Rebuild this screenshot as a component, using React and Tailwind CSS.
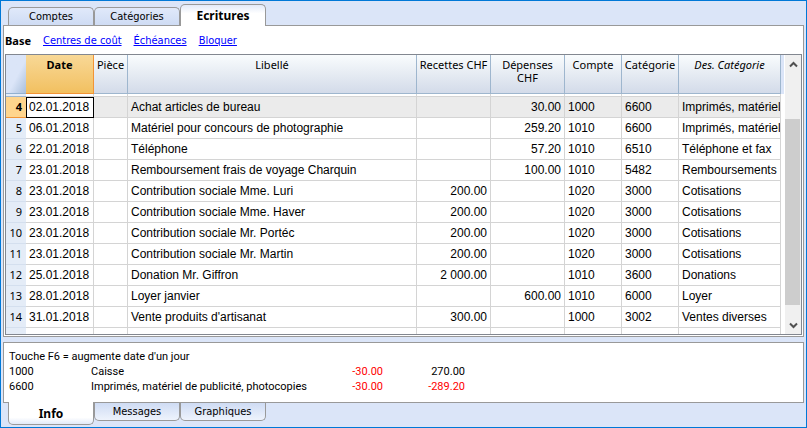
import React, { useState } from 'react';
import clsx from 'clsx';

const ENTRIES = [
    { no: 4, date: '02.01.2018', text: 'Achat articles de bureau', income: '', expense: '30.00', account: '1000', category: '6600', desc: 'Imprimés, matériel' },
    { no: 5, date: '06.01.2018', text: 'Matériel pour concours de photographie', income: '', expense: '259.20', account: '1010', category: '6600', desc: 'Imprimés, matériel' },
    { no: 6, date: '22.01.2018', text: 'Téléphone', income: '', expense: '57.20', account: '1010', category: '6510', desc: 'Téléphone et fax' },
    { no: 7, date: '23.01.2018', text: 'Remboursement frais de voyage Charquin', income: '', expense: '100.00', account: '1010', category: '5482', desc: 'Remboursements' },
    { no: 8, date: '23.01.2018', text: 'Contribution sociale Mme. Luri', income: '200.00', expense: '', account: '1020', category: '3000', desc: 'Cotisations' },
    { no: 9, date: '23.01.2018', text: 'Contribution sociale Mme. Haver', income: '200.00', expense: '', account: '1020', category: '3000', desc: 'Cotisations' },
    { no: 10, date: '23.01.2018', text: 'Contribution sociale Mr. Portéc', income: '200.00', expense: '', account: '1020', category: '3000', desc: 'Cotisations' },
    { no: 11, date: '23.01.2018', text: 'Contribution sociale Mr. Martin', income: '200.00', expense: '', account: '1020', category: '3000', desc: 'Cotisations' },
    { no: 12, date: '25.01.2018', text: 'Donation Mr. Giffron', income: '2 000.00', expense: '', account: '1010', category: '3600', desc: 'Donations' },
    { no: 13, date: '28.01.2018', text: 'Loyer janvier', income: '', expense: '600.00', account: '1010', category: '6000', desc: 'Loyer' },
    { no: 14, date: '31.01.2018', text: "Vente produits d'artisanat", income: '300.00', expense: '', account: '1000', category: '3002', desc: 'Ventes diverses' },
];

const COLUMNS = [
    { label: 'Date', width: 'w-[68px]' },
    { label: 'Pièce', width: 'w-[34px]' },
    { label: 'Libellé', width: '' },
    { label: 'Recettes CHF', width: 'w-[74px]' },
    { label: 'Dépenses CHF', width: 'w-[74px]' },
    { label: 'Compte', width: 'w-[57px]' },
    { label: 'Catégorie', width: 'w-[57px]' },
    { label: 'Des. Catégorie', width: 'w-[102px]' },
];

const INFO = [
    { account: '1000', name: 'Caisse', amount: '-30.00', balance: '270.00' },
    { account: '6600', name: 'Imprimés, matériel de publicité, photocopies', amount: '-30.00', balance: '-289.20' },
];

const TopTab = ({ label, active, onClick }) => (
    <button
        type="button"
        onClick={onClick}
        className={clsx(
            'w-[86px] rounded-t-[5px] border border-b-0 border-[#999999] text-center',
            active
                ? 'relative z-10 -mb-px h-[22px] bg-linear-to-b from-[#e2eaf8] to-white to-40% pt-px font-["Noto_Sans"] text-[12px] leading-[20px] font-bold'
                : 'h-[18px] bg-linear-to-b from-[#e0e9fa] to-[#cfdcf4] pt-px text-[11px] leading-[16px]'
        )}
    >
        {label}
    </button>
);

const BottomTab = ({ label, active, onClick }) => (
    <button
        type="button"
        onClick={onClick}
        className={clsx(
            'w-[86px] rounded-b-[5px] border border-t-0 border-[#999999] text-center',
            active
                ? 'relative z-10 -mt-px h-[23px] bg-linear-to-b from-white from-70% to-[#e2eaf8] pt-[2px] font-["Noto_Sans"] text-[12px] leading-[20px] font-bold'
                : 'h-[18px] bg-linear-to-b from-[#cfdcf4] to-[#eef3fc] pt-px text-[11px] leading-[16px]'
        )}
    >
        {label}
    </button>
);

const Scrollbar = () => (
    <div className="flex w-4 shrink-0 flex-col bg-[#f0f0f0]">
        <button type="button" aria-label="Défiler vers le haut" className="flex h-[18px] items-center justify-center">
            <svg width="9" height="7" viewBox="0 0 9 7" fill="none" stroke="#505050" strokeWidth="2">
                <path d="M1 5.5 L4.5 2 L8 5.5" />
            </svg>
        </button>
        <div className="flex grow flex-col">
            <div className="h-[46px]" />
            <div className="h-[186px] w-[15px] bg-[#cdcdcd]" />
        </div>
        <button type="button" aria-label="Défiler vers le bas" className="flex h-[17px] items-center justify-center">
            <svg width="9" height="7" viewBox="0 0 9 7" fill="none" stroke="#505050" strokeWidth="2">
                <path d="M1 1.5 L4.5 5 L8 1.5" />
            </svg>
        </button>
    </div>
);

const Cell = ({ children, selected, right }) => (
    <td
        className={clsx(
            'overflow-hidden border-r border-b border-[#d4d4d4] whitespace-nowrap',
            right ? 'pr-[3px] text-right' : 'pl-[3px]',
            selected && 'bg-[#ebebeb]'
        )}
    >
        {children}
    </td>
);

const EntriesTable = ({ selected, onSelect }) => (
    <div className="flex border border-[#828790] bg-white">
        <div className="min-w-0 flex-1 overflow-hidden">
            <table className="w-full table-fixed border-separate border-spacing-0 font-['Liberation_Sans',sans-serif] text-[12px] leading-[20px]">
                <colgroup>
                    <col className="w-[20px]" />
                    {COLUMNS.map(c => <col key={c.label} className={c.width} />)}
                </colgroup>
                <thead className="font-['Noto_Sans',sans-serif] text-[11px] leading-[13px]">
                    <tr className="h-[39px]">
                        <th className="border-b border-[#93b1d0] bg-linear-to-br from-[#dbe5f8] from-55% to-[#a9bfdb]" />
                        {COLUMNS.map((c, i) => (
                            <th
                                key={c.label}
                                className={clsx(
                                    'border-r border-b px-px pt-[3px] text-center align-top',
                                    i === 0
                                        ? 'border-[#f29436] bg-linear-to-b from-[#f8d896] to-[#f2c05f] font-bold'
                                        : 'border-[#9eb6ce] bg-linear-to-b from-[#f9fcfd] to-[#d3dbe9] font-normal',
                                    c.label === 'Des. Catégorie' && 'italic'
                                )}
                            >
                                {c.label}
                            </th>
                        ))}
                    </tr>
                </thead>
                <tbody>
                    <tr className="h-[3px]">
                        <td className="border-b border-[#9eb6ce] bg-[#e4ecf7] leading-[0px]" />
                        {COLUMNS.map(c => <td key={c.label} className="border-r border-b border-[#d4d4d4]" />)}
                    </tr>
                    {ENTRIES.map(e => {
                        const isSel = e.no === selected;
                        return (
                            <tr key={e.no} onClick={() => onSelect(e.no)} className="h-[21px]">
                                <th
                                    scope="row"
                                    className={clsx(
                                        'border-b pr-1 text-right font-["Noto_Sans"] text-[11px]',
                                        isSel
                                            ? 'border-[#f29436] bg-[#ffd58d] font-bold'
                                            : 'border-[#d4dfee] bg-[#e4ecf7] font-normal'
                                    )}
                                >
                                    {e.no}
                                </th>
                                <td
                                    className={clsx(
                                        'border-r border-b border-[#d4d4d4] pl-[3px] whitespace-nowrap',
                                        isSel && 'outline-1 -outline-offset-1 outline-black'
                                    )}
                                >
                                    {e.date}
                                </td>
                                <Cell selected={isSel} />
                                <Cell selected={isSel}>{e.text}</Cell>
                                <Cell selected={isSel} right>{e.income}</Cell>
                                <Cell selected={isSel} right>{e.expense}</Cell>
                                <Cell selected={isSel}>{e.account}</Cell>
                                <Cell selected={isSel}>{e.category}</Cell>
                                <Cell selected={isSel}>{e.desc}</Cell>
                            </tr>
                        );
                    })}
                    {/* top of the next row */}
                    <tr className="h-[6px]">
                        <td className="bg-[#e4ecf7]" />
                        {COLUMNS.map(c => <td key={c.label} className="border-r border-[#d4d4d4]" />)}
                    </tr>
                </tbody>
            </table>
        </div>
        <div className="w-1 shrink-0">
            <div className="h-[39px] w-[3px] bg-[#dbe5f8]" />
        </div>
        <Scrollbar />
    </div>
);

const App = () => {
    const [tab, setTab] = useState('Ecritures');
    const [infoTab, setInfoTab] = useState('Info');
    const [selected, setSelected] = useState(4);

    return (
        <div className="min-h-screen border border-[#0078d7] bg-[#dbe5f8] px-[2px] font-['DejaVu_Sans_Condensed','DejaVu_Sans',sans-serif] text-[11px] text-black">
            <nav className="flex h-6 items-end pl-[5px]">
                {['Comptes', 'Catégories', 'Ecritures'].map(t => (
                    <TopTab key={t} label={t} active={t === tab} onClick={() => setTab(t)} />
                ))}
            </nav>

            <main className="border border-[#999999] bg-white px-px pb-px">
                <div className="flex h-7 items-center gap-3 pt-[2px]">
                    <span className="font-['Noto_Sans',sans-serif] font-bold">Base</span>
                    <a href="#centres" className="text-[#0000ff] underline">Centres de coût</a>
                    <a href="#echeances" className="text-[#0000ff] underline">Échéances</a>
                    <a href="#bloquer" className="text-[#0000ff] underline">Bloquer</a>
                </div>
                <EntriesTable selected={selected} onSelect={setSelected} />
            </main>

            <section className="mt-[5px] border border-[#999999] bg-white pt-[6px] pb-2 pl-[5px] font-['Roboto',sans-serif] leading-[15px]">
                <p>Touche F6 = augmente date d'un jour</p>
                <table className="border-separate border-spacing-0">
                    <tbody>
                        {INFO.map(r => (
                            <tr key={r.account}>
                                <td className="w-[82px] p-0">{r.account}</td>
                                <td className="w-[218px] p-0 whitespace-nowrap">{r.name}</td>
                                <td className="w-[74px] p-0 text-right text-[#ff0000]">{r.amount}</td>
                                <td className={clsx('w-[82px] p-0 text-right', r.balance.startsWith('-') && 'text-[#ff0000]')}>{r.balance}</td>
                            </tr>
                        ))}
                    </tbody>
                </table>
            </section>

            <nav className="flex items-start pl-[5px]">
                {['Info', 'Messages', 'Graphiques'].map(t => (
                    <BottomTab key={t} label={t} active={t === infoTab} onClick={() => setInfoTab(t)} />
                ))}
            </nav>
        </div>
    );
};

export default App;
